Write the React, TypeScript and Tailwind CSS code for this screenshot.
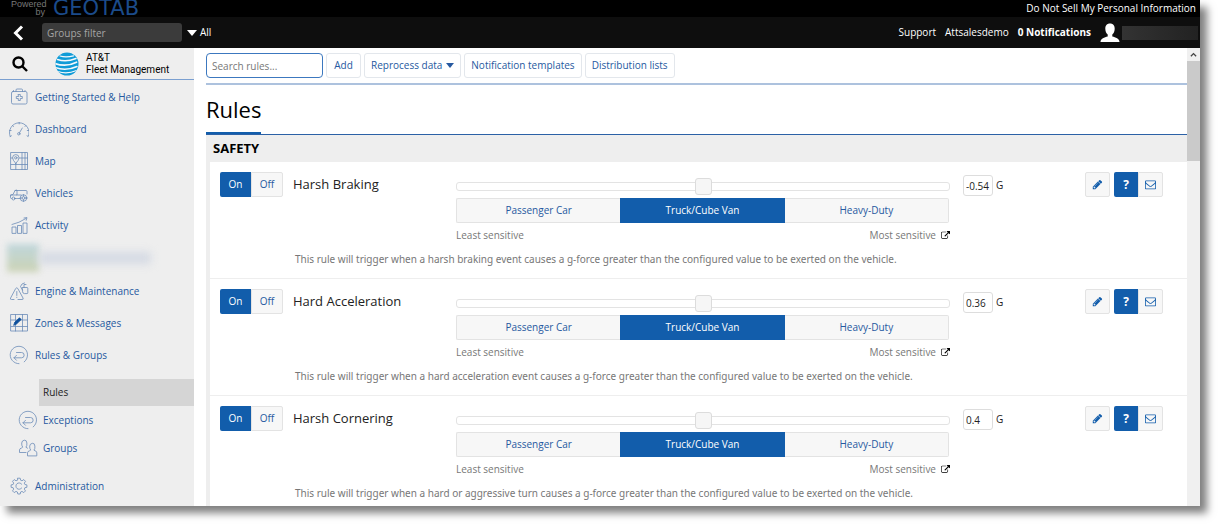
import { useState, type ReactNode } from 'react';
import clsx from 'clsx';

type IconProps = { className?: string };

function LineIcon({ children, className }: { children: ReactNode; className?: string }) {
  return (
    <svg
      viewBox="0 0 20 20"
      fill="none"
      stroke="currentColor"
      strokeWidth="0.8"
      strokeLinecap="round"
      strokeLinejoin="round"
      aria-hidden="true"
      className={clsx('size-5 shrink-0 text-[#6b8cb8]', className)}
    >
      {children}
    </svg>
  );
}

const HelpIcon = () => (
  <LineIcon>
    <rect x="2.500" y="4.500" width="15.500" height="12.500" rx="1.500" />
    <path d="M7 4.500V3Q7 2 8 2H12.500Q13.500 2 13.500 3V4.500M4.500 4.500V3.500M16 4.500V3.500" />
    <path d="M9.300 7.500h2v2h2v2h-2v2h-2v-2h-2v-2h2z" />
  </LineIcon>
);

const DashboardIcon = () => (
  <LineIcon>
    <path d="M1.200 17.500A9.800 9.800 0 1 1 19.200 17.500L18 16.800M1.200 17.500L2.400 16.800M10.200 3.400v1.500M3.500 6.500l1 1M17 6.500l-1 1M.6 11.500h1.500M18.300 11.500h1.500" />
    <circle cx="9.800" cy="14.800" r="1.200" />
    <path d="M10.500 13.700L13.300 9" />
  </LineIcon>
);

const MapIcon = () => (
  <LineIcon>
    <rect x="2" y="1.500" width="16.500" height="17" />
    <path d="M2 7h1.500M10.500 7h8M2 13.500h16.500M6.800 12.500v6M13 1.500v17M16 1.500v17" />
    <path d="M6.800 12.500Q3.600 9 3.600 6.800a3.200 3.200 0 0 1 6.400 0Q10 9 6.800 12.500z" />
    <circle cx="6.800" cy="6.800" r="1.200" />
  </LineIcon>
);

const VehiclesIcon = () => (
  <LineIcon>
    <path d="M5.500 15.500H7.500M11 15.500H8.500M3 15.500H2.500Q1.500 15.500 1.500 14.500V12L4 11.500L6 7.500H17Q18 7.500 18 8.500V11M6 7.500L8 7V12H2M8 12H12" />
    <circle cx="4.500" cy="15.500" r="1.500" />
    <circle cx="14.500" cy="15" r="3.300" />
    <circle cx="14.500" cy="15" r="1.400" />
    <path d="M14.500 11.700v1.500M14.500 16.800v1.500M11.200 15h1.500M16.500 15h1.500" />
  </LineIcon>
);

const ActivityIcon = () => (
  <LineIcon>
    <path d="M3 18v-6h4v6zM8.500 18v-7.500h4V18zM14 18V8h4v10z" />
    <path d="M3 9.500Q10 8 17 3.500M15 3l3-.4-.8 2.700" />
  </LineIcon>
);

const EngineIcon = () => (
  <LineIcon>
    <path d="M5 18.500H2.500Q.8 18.500 1.600 17L6.700 7.500Q7.800 6 8.800 7.500L14 17Q14.800 18.500 13 18.500H9M7.800 10.500v4M7.800 16.200v.3" />
    <path d="M13.500 6.500h4.500q.8 0 .8.800v4.500q0 .8-.8.800h-2.500q-2 0-2-2zM13.500 9L11.500 5.500L13 3l2.500-1M15 6.500V3.500h2" />
  </LineIcon>
);

const ZonesIcon = () => (
  <LineIcon>
    <rect x="2" y="1.500" width="16.500" height="16.500" />
    <path d="M2 7h16.500M2 13.500h16.500M6.500 1.500v16.500M13.500 1.500v16.500" />
    <path d="M4.800 12l1-2.800L10.500 4.800l1.700 1.700L7.500 11z" fill="#0d4f9c" stroke="#0d4f9c" />
  </LineIcon>
);

const ReturnIcon = () => (
  <LineIcon>
    <path d="M15.200 16.900A8.700 8.700 0 1 0 10 18.700" />
    <path d="M7.500 7.500H12.500a2.500 2.500 0 0 1 0 5.300H5M7.500 10.300L5 12.800l2.500 2.500" />
  </LineIcon>
);

const GroupsIcon = () => (
  <LineIcon>
    <path d="M8 14.500H1.500V12q0-1.500 2-2l1.200-.8Q3.500 7.500 3.700 5T6.300 2.200t2.600 2.800-1 4.200L9.500 10.200" />
    <path d="M9.500 17.500V14.800q0-1.500 2-2l1.200-.7q-1.200-1.600-1-4t2.600-2.800 2.600 2.800-1 4l1.200.7q1.700.5 1.700 2v2.700z" />
  </LineIcon>
);

const GearIcon = () => (
  <LineIcon>
    <path d="M8.800 2.200h2.400l.4 2 1.400.6 1.800-1.200 1.700 1.700-1.200 1.800.6 1.400 2 .4v2.400l-2 .4-.6 1.400 1.200 1.800-1.700 1.700-1.800-1.200-1.400.6-.4 2H8.800l-.4-2-1.400-.6-1.800 1.200-1.700-1.700 1.200-1.800-.6-1.400-2-.4V8.900l2-.4.6-1.400-1.200-1.800 1.700-1.700L7 4.800l1.400-.6z" />
    <path d="M12.700 8.200a3.200 3.200 0 1 0 0 3.800" />
  </LineIcon>
);

const PencilIcon = ({ className }: IconProps) => (
  <svg viewBox="0 0 1792 1792" fill="currentColor" aria-hidden="true" className={className}>
    <path d="M491 1536l91-91-235-235-91 91v107h128v128h107zm523-928q0-22-22-22-10 0-17 7l-542 542q-7 7-7 17 0 22 22 22 10 0 17-7l542-542q7-7 7-17zm-54-192l416 416-832 832h-416v-416zm683 96q0 53-37 90l-166 166-416-416 166-165q36-38 90-38 53 0 91 38l235 234q37 39 37 91z" />
  </svg>
);

const EnvelopeIcon = ({ className }: IconProps) => (
  <svg viewBox="0 0 1792 1792" fill="currentColor" aria-hidden="true" className={className}>
    <path d="M1664 1504v-768q-32 36-69 66-268 206-426 338-51 43-83 67t-86.5 48.5-102.5 24.5h-2q-48 0-102.5-24.5t-86.5-48.5-83-67q-158-132-426-338-37-30-69-66v768q0 13 9.500 22.500t22.500 9.500h1472q13 0 22.500-9.500t9.500-22.500zm0-1051v-24.500l-.5-13-3-12.500-5.500-9-9-7.500-14-2.500h-1472q-13 0-22.500 9.500t-9.500 22.500q0 168 147 284 193 152 401 317 6 5 35 29.500t46 37.500 44.500 31.500 50.500 27.500 43 9h2q20 0 43-9t50.500-27.500 44.500-31.500 46-37.500 35-29.500q208-165 401-317 54-43 100.500-115.500t46.500-131.500zm128-37v1088q0 66-47 113t-113 47h-1472q-66 0-113-47t-47-113v-1088q0-66 47-113t113-47h1472q66 0 113 47t47 113z" />
  </svg>
);

const ExternalIcon = ({ className }: IconProps) => (
  <svg viewBox="0 0 1792 1792" fill="currentColor" aria-hidden="true" className={className}>
    <path d="M1408 928v320q0 119-84.500 203.500t-203.500 84.500h-832q-119 0-203.500-84.500t-84.500-203.500v-832q0-119 84.500-203.500t203.500-84.500h704q14 0 23 9t9 23v64q0 14-9 23t-23 9h-704q-66 0-113 47t-47 113v832q0 66 47 113t113 47h832q66 0 113-47t47-113v-320q0-14 9-23t23-9h64q14 0 23 9t9 23zm384-864v512q0 26-19 45t-45 19-45-19l-176-176-652 652q-10 10-23 10t-23-10l-114-114q-10-10-10-23t10-23l652-652-176-176q-19-19-19-45t19-45 45-19h512q26 0 45 19t19 45z" />
  </svg>
);

const CaretDown = ({ className }: IconProps) => (
  <svg viewBox="0 0 10 6" fill="currentColor" aria-hidden="true" className={className}>
    <path d="M0 0h10L5 6z" />
  </svg>
);

function Globe() {
  return (
    <svg viewBox="0 0 24 24" aria-hidden="true" className="size-6 shrink-0">
      <clipPath id="globe">
        <circle cx="12" cy="12" r="11.500" />
      </clipPath>
      <g clipPath="url(#globe)">
        <rect width="24" height="24" fill="#0f9bd7" />
        <g fill="none" stroke="#f4f8fb" strokeLinecap="round">
          <path d="M5 4Q11 5.800 18.500 3.800" strokeWidth="1.200" />
          <path d="M2.500 7.500Q11 10.500 21 6.500" strokeWidth="1.500" />
          <path d="M0 11.500Q11 15.500 21.500 10.200" strokeWidth="1.700" />
          <path d="M0 15.500Q11 19.500 22 14.500" strokeWidth="1.500" />
          <path d="M3 19.500Q12 22.500 21.500 18.500" strokeWidth="1.200" />
        </g>
      </g>
    </svg>
  );
}

function TopBar() {
  return (
    <header className="text-white">
      <div className="flex h-[17px] justify-between bg-black pr-1 pl-[11px]">
        <div className="flex items-start gap-[8px]">
          <div className="w-[34px] text-right font-['Liberation_Sans'] text-[9px] leading-[8px] text-[#777]">
            Powered by
          </div>
          <div className="font-['DejaVu_Sans'] text-[21px] leading-[17px] text-[#1b4b8a]">GEOTAB</div>
        </div>
        <a href="#privacy" className="text-[10px] leading-[17px]">
          Do Not Sell My Personal Information
        </a>
      </div>
      <div className="flex h-[31px] items-center bg-[#0e0e0e] pl-3 text-[10px]">
        <button aria-label="Collapse menu">
          <svg viewBox="0 0 12 16" fill="none" stroke="currentColor" strokeWidth="3" className="h-4 w-3">
            <path d="M10 1.500L3.500 8L10 14.500" />
          </svg>
        </button>
        <input
          aria-label="Groups filter"
          placeholder="Groups filter"
          className="ml-[18px] h-[19px] w-[140px] rounded-[3px] bg-[#3b3b3b] px-[5px] placeholder:text-[#a5a5a5]"
        />
        <button className="ml-[5px] flex items-center gap-[3px]">
          <CaretDown className="h-[6px] w-[10px]" />
          All
        </button>
        <div className="ml-auto flex items-center">
          <a href="#support">Support</a>
          <a href="#account" className="ml-[9px]">
            Attsalesdemo
          </a>
          <a href="#notifications" className="ml-[9px] font-bold">
            0 Notifications
          </a>
          <svg viewBox="0 0 20 20" fill="currentColor" aria-hidden="true" className="ml-[9px] size-5">
            <path d="M10 .5c3.200 0 4.700 2.200 4.700 5.200 0 2.600-1 4.600-2.400 5.700v2.200c3.200.8 7.200 2 7.200 5.400H.5c0-3.400 4-4.600 7.200-5.400v-2.200C6.300 10.300 5.300 8.300 5.300 5.700 5.300 2.700 6.800.5 10 .5z" />
          </svg>
          <div className="mr-[2px] ml-[2px] h-[14px] w-[76px] bg-linear-to-r from-[#333] to-[#222]" />
        </div>
      </div>
    </header>
  );
}

function NavItem({ icon, label }: { icon: ReactNode; label: string }) {
  return (
    <a href="#" className="flex h-8 items-center gap-[6px] pl-[9px] hover:bg-[#e2e2e2]">
      {icon}
      {label}
    </a>
  );
}

function Sidebar() {
  return (
    <aside className="w-[194px] shrink-0 bg-[#eee] text-[10px] text-[#2659a0]">
      <div className="flex h-8 items-center border-b border-[#7a9fd0] pl-3 text-black">
        <button aria-label="Search">
          <svg viewBox="0 0 16 16" fill="none" stroke="currentColor" strokeWidth="2.400" className="size-4">
            <circle cx="6.500" cy="6.500" r="5" />
            <path d="M10 10l5 5" />
          </svg>
        </button>
        <div className="ml-[27px] flex items-center gap-[7px]">
          <Globe />
          <div className="font-['Roboto'] text-[10px] leading-[12px] whitespace-nowrap">
            <div>AT&amp;T</div>
            <div>Fleet Management</div>
          </div>
        </div>
      </div>
      <nav className="pt-[1px] pb-1">
        <NavItem icon={<HelpIcon />} label="Getting Started & Help" />
        <NavItem icon={<DashboardIcon />} label="Dashboard" />
        <NavItem icon={<MapIcon />} label="Map" />
        <NavItem icon={<VehiclesIcon />} label="Vehicles" />
        <NavItem icon={<ActivityIcon />} label="Activity" />
        <div className="flex h-[34px] items-center pl-[7px]">
          <div className="h-7 w-8 bg-linear-to-b from-[#bfd6dc] to-[#ccd3b4] blur-[3px]" />
          <div className="h-3 w-28 bg-[#d5dae4] blur-[4px]" />
        </div>
        <NavItem icon={<EngineIcon />} label="Engine & Maintenance" />
        <NavItem icon={<ZonesIcon />} label="Zones & Messages" />
        <NavItem icon={<ReturnIcon />} label="Rules & Groups" />
        <div className="pt-2 pb-2">
          <a href="#rules" className="ml-[39px] flex h-[27px] items-center bg-[#d5d5d5] pl-1 text-[#222]">
            Rules
          </a>
          <a href="#exceptions" className="flex h-7 items-center gap-[5px] pl-[18px]">
            <ReturnIcon />
            Exceptions
          </a>
          <a href="#groups" className="flex h-7 items-center gap-[5px] pl-[18px]">
            <GroupsIcon />
            Groups
          </a>
        </div>
        <NavItem icon={<GearIcon />} label="Administration" />
      </nav>
    </aside>
  );
}

function ToolbarButton({ children }: { children: ReactNode }) {
  return (
    <button className="flex h-[25px] min-w-[35px] items-center justify-center gap-1 rounded-[3px] border border-[#e3e7ec] px-[6px] whitespace-nowrap text-[#2659a0] hover:bg-[#f4f4f4]">
      {children}
    </button>
  );
}

const presets = ['Passenger Car', 'Truck/Cube Van', 'Heavy-Duty'];

const rules = [
  {
    name: 'Harsh Braking',
    value: '-0.54',
    text: 'This rule will trigger when a harsh braking event causes a g-force greater than the configured value to be exerted on the vehicle.',
  },
  {
    name: 'Hard Acceleration',
    value: '0.36',
    text: 'This rule will trigger when a hard acceleration event causes a g-force greater than the configured value to be exerted on the vehicle.',
  },
  {
    name: 'Harsh Cornering',
    value: '0.4',
    text: 'This rule will trigger when a hard or aggressive turn causes a g-force greater than the configured value to be exerted on the vehicle.',
  },
];

const active = 'bg-[#125dab] text-white';
const inactive = 'border border-[#e3e3e3] bg-[#f7f7f7] text-[#2659a0]';

function RuleRow({ rule }: { rule: (typeof rules)[number] }) {
  const [on, setOn] = useState(true);
  const [preset, setPreset] = useState(1);

  return (
    <li className="border-b border-[#eee] pt-[10px] pb-[10px] pl-[10px] last:border-b-0 last:pb-1">
      <div className="flex items-start">
        <div className="flex h-[25px] w-[63px] shrink-0">
          <button onClick={() => setOn(true)} className={clsx('w-[31px] rounded-l-[2px]', on ? active : inactive)}>
            On
          </button>
          <button onClick={() => setOn(false)} className={clsx('w-8 rounded-r-[2px]', on ? inactive : active)}>
            Off
          </button>
        </div>
        <h2 className="w-[173px] shrink-0 pl-[10px] text-[13px] leading-[25px] text-[#222]">{rule.name}</h2>
        <div className="min-w-0 flex-1">
          <input
            type="range"
            aria-label={`${rule.name} sensitivity`}
            className="mt-[6px] block h-[17px] w-full appearance-none bg-transparent [&::-webkit-slider-runnable-track]:h-[9px] [&::-webkit-slider-runnable-track]:rounded-[3px] [&::-webkit-slider-runnable-track]:border [&::-webkit-slider-runnable-track]:border-[#e3e3e3] [&::-webkit-slider-runnable-track]:bg-white [&::-webkit-slider-thumb]:-mt-[5px] [&::-webkit-slider-thumb]:size-[17px] [&::-webkit-slider-thumb]:appearance-none [&::-webkit-slider-thumb]:rounded-[3px] [&::-webkit-slider-thumb]:border [&::-webkit-slider-thumb]:border-[#dcdcdc] [&::-webkit-slider-thumb]:bg-[#f6f6f6]"
          />
          <div className="mt-[3px] mr-px grid h-[25px] grid-cols-3">
            {presets.map((label, i) => (
              <button
                key={label}
                onClick={() => setPreset(i)}
                className={clsx(
                  'first:rounded-l-[2px] last:rounded-r-[2px]',
                  i === preset ? active : inactive,
                  i === 0 && 'border-r-0',
                  i === 2 && 'border-l-0',
                )}
              >
                {label}
              </button>
            ))}
          </div>
          <div className="flex h-6 items-center justify-between text-[#777]">
            <span>Least sensitive</span>
            <a href="#" className="flex items-center gap-[5px]">
              Most sensitive
              <ExternalIcon className="size-[9px] text-black" />
            </a>
          </div>
        </div>
        <label className="mt-[3px] ml-[13px] flex w-[122px] shrink-0 items-center gap-[3px] text-[#222]">
          <input
            defaultValue={rule.value}
            className="h-[21px] w-[30px] rounded-[3px] border border-[#ddd] px-[2px]"
          />
          G
        </label>
        <div className="mr-6 flex h-[25px] shrink-0">
          <button
            aria-label="Edit"
            className="mr-1 flex w-[25px] items-center justify-center rounded-[2px] border border-[#e3e3e3] bg-[#f7f7f7] text-[#125dab]"
          >
            <PencilIcon className="size-[11px]" />
          </button>
          <button className="w-[24px] rounded-l-[2px] bg-[#125dab] text-[12px] font-bold text-white">?</button>
          <button
            aria-label="Email"
            className="flex w-[25px] items-center justify-center rounded-r-[2px] border border-[#e3e3e3] bg-[#f7f7f7] text-[#125dab]"
          >
            <EnvelopeIcon className="size-[11px]" />
          </button>
        </div>
      </div>
      <p className="pt-[3px] pl-[75px] font-['Noto_Sans'] leading-[18px] text-[#777]">{rule.text}</p>
    </li>
  );
}

function Scrollbar() {
  return (
    <div className="w-[13px] shrink-0 bg-[#f0f0f0]">
      <div className="flex h-[13px] items-center justify-center">
        <svg viewBox="0 0 8 5" fill="none" stroke="#444" strokeWidth="1.500" className="h-[5px] w-[7px]">
          <path d="M1 4.500L4 1.500L7 4.500" />
        </svg>
      </div>
      <div className="h-[100px] bg-[#cacaca]" />
    </div>
  );
}

export default function App() {
  return (
    <div className="bg-white pr-[18px] pb-[18px] font-['Open_Sans',sans-serif]">
      <div className="shadow-[7px_7px_8px_rgba(0,0,0,0.5)]">
        <TopBar />
        <div className="flex bg-white">
          <Sidebar />
          <main className="ml-3 min-w-0 flex-1 text-[10px]">
            <div className="flex gap-[3px] border-b-2 border-[#adc2de] pt-[5px] pb-[5px]">
              <input
                aria-label="Search rules"
                placeholder="Search rules..."
                className="h-[25px] w-[117px] rounded-[4px] border border-[#3c78bf] px-[5px] placeholder:text-[#777]"
              />
              <ToolbarButton>Add</ToolbarButton>
              <ToolbarButton>
                Reprocess data
                <CaretDown className="h-[5px] w-[8px]" />
              </ToolbarButton>
              <ToolbarButton>Notification templates</ToolbarButton>
              <ToolbarButton>Distribution lists</ToolbarButton>
            </div>
            <div className="flex border-b border-[#2b61a6] pt-1">
              <h1 className="h-[45px] border-b-2 border-[#125dab] text-[22px] leading-[40px] text-black">Rules</h1>
            </div>
            <section className="border-l-4 border-[#eee]">
              <h2 className="bg-[#eee] pl-[3px] text-[13px] leading-[27px] font-bold text-black">SAFETY</h2>
              <ul>
                {rules.map((rule) => (
                  <RuleRow key={rule.name} rule={rule} />
                ))}
              </ul>
            </section>
          </main>
          <Scrollbar />
        </div>
      </div>
    </div>
  );
}
